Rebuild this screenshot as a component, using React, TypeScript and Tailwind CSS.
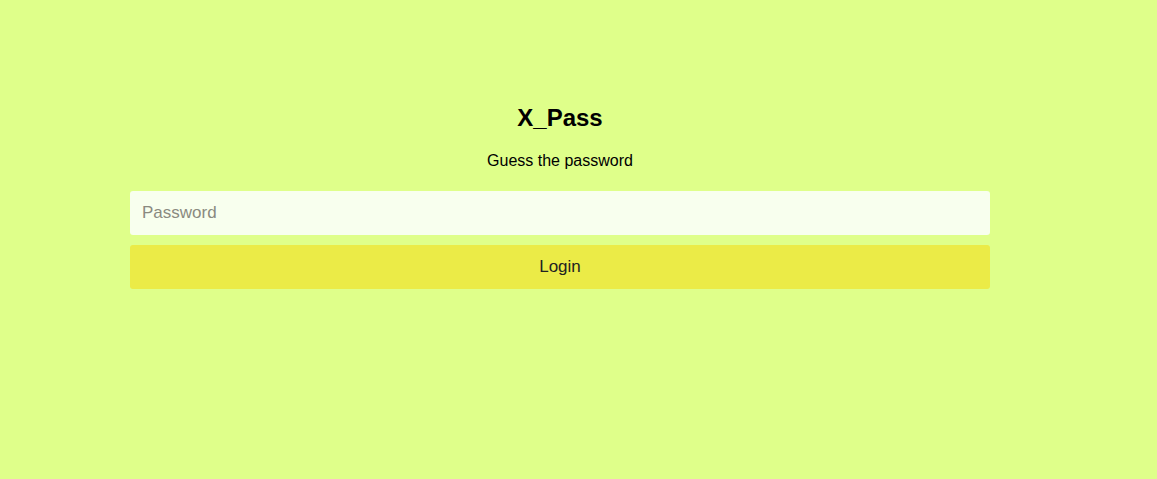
export default function App() {
  return (
    <div
      className="min-h-[479px] w-full bg-[#dfff8a] pt-[104px]"
      style={{ fontFamily: '"Liberation Sans", Arial, sans-serif' }}
    >
      <div className="ml-[130px] flex w-[860px] flex-col">
        <h1 className="text-center text-[24px] font-bold leading-[28px] text-black">X_Pass</h1>
        <p className="mt-[19px] text-center text-[16px] leading-[20px] text-black">Guess the password</p>
        <input
          type="password"
          placeholder="Password"
          className="mt-[20px] h-[44px] w-full rounded-[3px] bg-[#f8ffee] px-[12px] text-[17px] text-black outline-none placeholder:text-[#8a8a80]"
        />
        <button className="mt-[10px] h-[44px] w-full rounded-[3px] bg-[#ebeb47] text-[17px] text-[#222]">
          Login
        </button>
      </div>
    </div>
  );
}
